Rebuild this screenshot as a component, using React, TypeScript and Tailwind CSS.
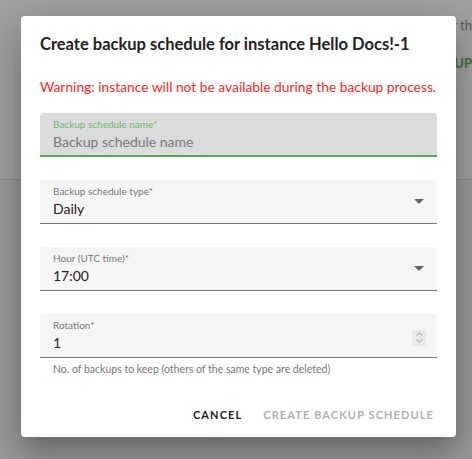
import { useState } from "react";

const Caret = () => (
  <svg width="10" height="5" viewBox="0 0 10 5" className="shrink-0">
    <path d="M0 0 L10 0 L5 5 Z" fill="#666" />
  </svg>
);

const Spinner = () => (
  <div className="w-[14px] h-[16px] bg-[#e9e9e9] flex flex-col items-center justify-center gap-[3px]">
    <svg width="7" height="4" viewBox="0 0 7 4">
      <path d="M0.5 3.5 L3.5 0.8 L6.5 3.5" fill="none" stroke="#999" strokeWidth="1" />
    </svg>
    <svg width="7" height="4" viewBox="0 0 7 4">
      <path d="M0.5 0.5 L3.5 3.2 L6.5 0.5" fill="none" stroke="#999" strokeWidth="1" />
    </svg>
  </div>
);

type FieldProps = {
  label: string;
  value: string;
  focused?: boolean;
  placeholder?: boolean;
  right?: React.ReactNode;
};

const Field = ({ label, value, focused, placeholder, right }: FieldProps) => (
  <div
    className={`h-[44px] rounded-t-[4px] flex items-center pl-[13px] pr-[13px] ${
      focused ? "bg-[#dcdcdc] border-b-2 border-[#4caf50]" : "bg-[#f5f5f5] border-b border-[#777]"
    }`}
  >
    <div className="flex-1 flex flex-col pt-[1px]">
      <span className={`text-[10px] leading-[12px] ${focused ? "text-[#66bb6a]" : "text-[#777]"}`}>{label}</span>
      <span className={`text-[14px] leading-[20px] mt-[2px] ${placeholder ? "text-[#777]" : "text-[#222]"}`}>{value}</span>
    </div>
    {right}
  </div>
);

export default function App() {
  const [open] = useState(true);
  return (
    <div className="w-[472px] h-[459px] relative overflow-hidden bg-[#9b9b9b]" style={{ fontFamily: "Lato, sans-serif" }}>
      {/* page behind the overlay */}
      <div className="h-[180px] bg-[#a1a1a1] border-b border-[#8c8c8c] flex justify-end">
        <div className="pt-[17px] flex flex-col items-end">
          <span className="text-[13px] text-[#555] leading-[16px]">or th</span>
          <span className="mt-[22px] text-[13px] font-bold text-[#3c6e3c] leading-[16px]">UP</span>
        </div>
      </div>

      {open && (
        <div className="absolute left-[21px] top-[16px] w-[435px] h-[421px] bg-white rounded-[4px] shadow-[0_11px_15px_-7px_rgba(0,0,0,0.2),0_24px_38px_3px_rgba(0,0,0,0.14),0_9px_46px_8px_rgba(0,0,0,0.12)] flex flex-col">
          <h2 className="pt-[16px] pl-[19px] text-[16.5px] leading-[24px] font-bold text-[#222] whitespace-nowrap">
            Create backup schedule for instance Hello Docs!-1
          </h2>
          <div className="px-[19px] pt-[21px] flex flex-col">
            <p className="text-[13.8px] leading-[20px] text-[#ff1f1f] whitespace-nowrap">
              Warning: instance will not be available during the backup process.
            </p>
            <div className="mt-[16px] flex flex-col gap-[23px]">
              <Field label="Backup schedule name*" value="Backup schedule name" focused placeholder />
              <Field label="Backup schedule type*" value="Daily" right={<Caret />} />
              <Field label="Hour (UTC time)*" value="17:00" right={<Caret />} />
              <div className="flex flex-col">
                <Field label="Rotation*" value="1" right={<div className="mr-[-2px] mt-[4px]"><Spinner /></div>} />
                <span className="ml-[13px] mt-[5px] text-[10.5px] leading-[12px] text-[#777] whitespace-nowrap">
                  No. of backups to keep (others of the same type are deleted)
                </span>
              </div>
            </div>
          </div>
          <div className="mt-auto pb-[14px] pr-[22px] flex justify-end items-center gap-[21px]">
            <button className="text-[11px] font-bold tracking-[0.1em] text-[#222]">CANCEL</button>
            <button className="text-[11px] font-bold tracking-[0.1em] text-[#b0b0b0]">CREATE BACKUP SCHEDULE</button>
          </div>
        </div>
      )}
    </div>
  );
}
